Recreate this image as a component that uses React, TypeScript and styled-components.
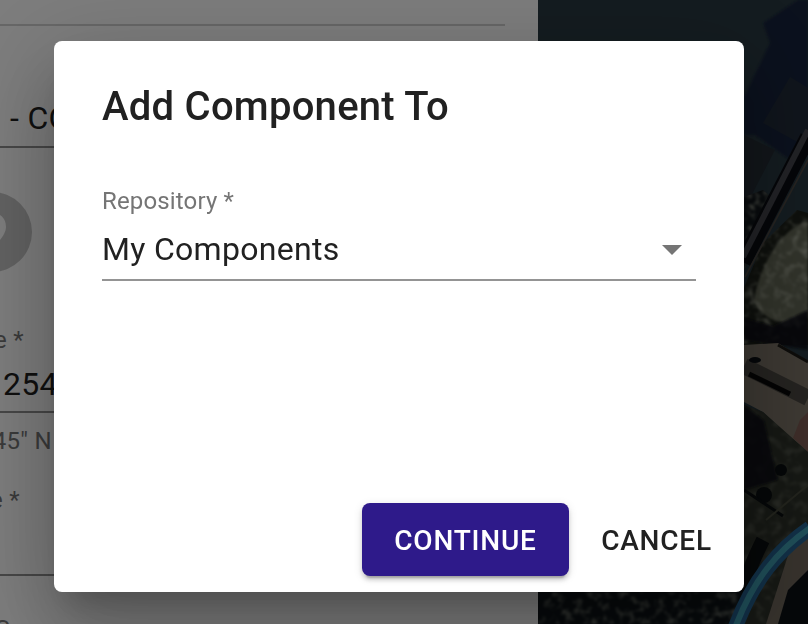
import React from "react";
import styled, { createGlobalStyle } from "styled-components";

const Global = createGlobalStyle`
  html, body { margin: 0; padding: 0; height: 100%; overflow: hidden; background: #fff; }
  body { font-family: Roboto, "Liberation Sans", sans-serif; }
  #root { height: 100%; }
`;

const Page = styled.div`
  display: flex;
  width: 808px;
  height: 624px;
  overflow: hidden;
`;

const FormPanel = styled.section`
  flex: 0 0 538px;
  display: flex;
  flex-direction: column;
  padding-right: 33px;
  box-sizing: border-box;
  background: #fafafa;
  color: #1f1f1f;
  overflow: hidden;
`;

const TopRule = styled.hr`
  width: 100%;
  height: 2px;
  margin: 24px 0 0;
  border: 0;
  background: #cfcfcf;
  flex: none;
`;

const TypeValue = styled.div`
  margin-top: 72px;
  padding-left: 10px;
  height: 48px;
  line-height: 40px;
  font-size: 32px;
  letter-spacing: 0.3px;
  white-space: nowrap;
  flex: none;
`;

const Underline = styled.div`
  height: 2px;
  background: #8e8e8e;
  flex: none;
`;

const PinMark = styled.svg`
  display: block;
  flex: none;
  width: 40px;
  height: 80px;
  margin-top: 44px;
`;

const FieldLabel = styled.div<{ $end: number; $top: number }>`
  display: flex;
  justify-content: flex-end;
  flex: none;
  width: ${(p) => p.$end}px;
  margin-top: ${(p) => p.$top}px;
  height: 28px;
  line-height: 28px;
  font-size: 24px;
  letter-spacing: 0.3px;
  color: #757575;
  white-space: nowrap;
`;

const FieldValue = styled.div`
  flex: none;
  margin-top: 10px;
  padding-left: 3px;
  height: 47px;
  line-height: 40px;
  font-size: 32px;
  letter-spacing: 0.3px;
  white-space: nowrap;
`;

const EmptyValue = styled.div`
  flex: none;
  height: 60px;
`;

const MapPanel = styled.div`
  flex: 1;
  min-width: 0;
  background: #283840;
`;

const MapDrawing = styled.svg`
  display: block;
  width: 270px;
  height: 624px;
`;

const Backdrop = styled.div`
  position: fixed;
  inset: 0;
  box-sizing: border-box;
  display: flex;
  padding: 41px 64px 32px 54px;
  background: rgba(0, 0, 0, 0.5);
`;

const Dialog = styled.div`
  flex: 1;
  display: flex;
  flex-direction: column;
  background: #fff;
  border-radius: 8px;
  box-shadow: 0 22px 30px -14px rgba(0, 0, 0, 0.2), 0 48px 76px 6px rgba(0, 0, 0, 0.16),
    0 18px 92px 16px rgba(0, 0, 0, 0.14);
`;

const Title = styled.h2`
  margin: 0;
  padding: 42px 48px 0;
  height: 48px;
  line-height: 48px;
  font-size: 40px;
  font-weight: 500;
  letter-spacing: 0.25px;
  color: #212121;
`;

const Body = styled.div`
  flex: 1;
  padding: 56px 48px 0;
`;

const SelectLabel = styled.label`
  display: block;
  height: 28px;
  line-height: 28px;
  font-size: 24px;
  letter-spacing: 0.15px;
  color: #757575;
`;

const SelectField = styled.div`
  display: flex;
  align-items: center;
  justify-content: space-between;
  height: 57px;
  margin-top: 9px;
  padding-right: 14px;
  border-bottom: 2px solid #949494;
  box-sizing: border-box;
`;

const SelectValue = styled.span`
  font-size: 32px;
  letter-spacing: 0.3px;
  color: #212121;
  margin-top: -5px;
`;

const Caret = styled.svg`
  display: block;
  width: 20px;
  height: 10px;
  margin-top: -3px;
`;

const Actions = styled.div`
  display: flex;
  justify-content: flex-end;
  gap: 16px;
  padding: 0 16px 16px;
`;

const PrimaryButton = styled.button`
  box-sizing: border-box;
  width: 207px;
  height: 73px;
  padding: 2px 0 0;
  border: 0;
  border-radius: 8px;
  background: #2e1a8a;
  color: #fff;
  font: 500 28px Roboto, sans-serif;
  letter-spacing: 0.8px;
  box-shadow: 0 6px 2px -4px rgba(0, 0, 0, 0.2), 0 4px 4px 0 rgba(0, 0, 0, 0.14), 0 2px 10px 0 rgba(0, 0, 0, 0.12);
`;

const TextButton = styled.button`
  box-sizing: border-box;
  width: 143px;
  height: 73px;
  padding: 2px 0 0;
  border: 0;
  background: transparent;
  color: #212121;
  font: 500 28px Roboto, sans-serif;
  letter-spacing: 0.8px;
`;

export default function App() {
  return (
    <Page>
      <Global />
      <FormPanel>
        <TopRule />
        <TypeValue>- CO</TypeValue>
        <Underline />
        <PinMark viewBox="0 0 40 80">
          <path
            fillRule="evenodd"
            fill="#c4c4c4"
            d="M-8 0a40 40 0 1 1 0 80a40 40 0 1 1 0-80zM-8 21c-9 0-14 6-14 14c0 10 14 21 14 21s14-11 14-21c0-8-5-14-14-14z"
          />
        </PinMark>
        <FieldLabel $end={24} $top={54}>
          e *
        </FieldLabel>
        <FieldValue>254</FieldValue>
        <Underline />
        <FieldLabel $end={52} $top={14}>
          45" N
        </FieldLabel>
        <FieldLabel $end={20} $top={31}>
          e *
        </FieldLabel>
        <EmptyValue />
        <Underline />
        <FieldLabel $end={10} $top={39}>
          S
        </FieldLabel>
      </FormPanel>
      <MapPanel>
        <MapDrawing viewBox="0 0 270 624">
          <defs>
            <filter id="foliage" x="0" y="0" width="100%" height="100%">
              <feTurbulence type="fractalNoise" baseFrequency="0.11" numOctaves="3" seed="7" />
              <feColorMatrix values="0 0 0 0 0.38  0 0 0 0 0.4  0 0 0 0 0.32  2.4 0 0 0 -1.15" />
              <feGaussianBlur stdDeviation="0.8" />
              <feComposite in2="SourceAlpha" operator="in" />
            </filter>
            <filter id="soft" x="-10%" y="-10%" width="120%" height="120%">
              <feGaussianBlur stdDeviation="1.2" />
            </filter>
          </defs>
          {/* water and its shadows */}
          <rect width="270" height="624" fill="#283840" />
          <path d="M260 0L225 23L232 43L206 97V135L217 135L252 160L270 150V90L252 77L225 123L270 150V0z" fill="#18243a" filter="url(#soft)" />
          <path d="M206 135L237 150L206 210z" fill="#242c34" />
          <path d="M252 77L270 88V148L225 123z" fill="#202a38" />
          {/* ground and tree crowns */}
          <path d="M206 197L225 190L242 205L206 270z" fill="#10161a" />
          <path d="M206 197L225 190L242 205L206 270z" fill="#fff" filter="url(#foliage)" />
          <path d="M205 290L225 243L259 210L270 213V345H205z" fill="#1c2019" />
          <path d="M216 300C224 255 250 225 270 222V312C250 330 225 322 216 300z" fill="#7a7e6a" opacity="0.75" filter="url(#soft)" />
          <path d="M205 290L225 243L259 210L270 213V345H205z" fill="#fff" filter="url(#foliage)" />
          <path d="M206 318L235 326L270 310V350L239 345L206 340z" fill="#0c1014" opacity="0.85" filter="url(#soft)" />
          {/* plaza and road */}
          <path d="M206 345L240 343L270 362V452L250 435L225 412L206 402z" fill="#7a7266" />
          <path d="M206 366L270 398" stroke="#494640" strokeWidth="16" />
          <path d="M240 345L270 362" stroke="#1a1814" strokeWidth="3" />
          <path d="M262 420L270 412V452L255 438z" fill="#7a5a52" />
          <path d="M211 374L252 394" stroke="#080808" strokeWidth="5" />
          <ellipse cx="217" cy="360" rx="6" ry="3" fill="#0a0e14" />
          {/* grass and scattered trees */}
          <path d="M206 405L225 412L270 452V624H206z" fill="#2c3028" />
          <path d="M206 405L225 412L270 452V624H206z" fill="#fff" filter="url(#foliage)" opacity="0.35" />
          <path d="M206 405L226 420L240 480L206 490z" fill="#0a0e12" opacity="0.85" filter="url(#soft)" />
          <circle cx="243" cy="470" r="6" fill="#0a0e10" />
          <circle cx="226" cy="495" r="8" fill="#0a0e10" />
          <path d="M206 490L245 516" stroke="#0a0e10" strokeWidth="3" />
          <path d="M228 520L270 485" stroke="#45473a" strokeWidth="2" />
          <path d="M225 540C215 560 208 575 206 600" stroke="#0a0e10" strokeWidth="14" fill="none" />
          <path d="M255 540L270 530V575L248 624H228z" fill="#6e655a" />
          <path d="M250 590L270 570V624H240z" fill="#0c1014" />
          {/* bridge */}
          <path d="M205 262L270 137" stroke="#0a0c12" strokeWidth="16" />
          <path d="M205 257L270 130" stroke="#44454c" strokeWidth="6" />
          <path d="M207 277L270 160" stroke="#4c4640" strokeWidth="1.6" />
          {/* strip under the dialog */}
          <rect x="0" y="592" width="206" height="32" fill="#0e1418" />
          <rect x="0" y="592" width="206" height="32" fill="#fff" filter="url(#foliage)" opacity="0.7" />
          {/* blue route */}
          <path d="M272 528C240 550 215 580 197 628" fill="none" stroke="#24608e" strokeWidth="15" />
          <path d="M272 528C240 550 215 580 197 628" fill="none" stroke="#3f9cb0" strokeWidth="6" />
        </MapDrawing>
      </MapPanel>
      <Backdrop>
        <Dialog>
          <Title>Add Component To</Title>
          <Body>
            <SelectLabel>Repository *</SelectLabel>
            <SelectField>
              <SelectValue>My Components</SelectValue>
              <Caret viewBox="0 0 20 10">
                <path d="M0 0H20L10 10z" fill="#757575" />
              </Caret>
            </SelectField>
          </Body>
          <Actions>
            <PrimaryButton>CONTINUE</PrimaryButton>
            <TextButton>CANCEL</TextButton>
          </Actions>
        </Dialog>
      </Backdrop>
    </Page>
  );
}
